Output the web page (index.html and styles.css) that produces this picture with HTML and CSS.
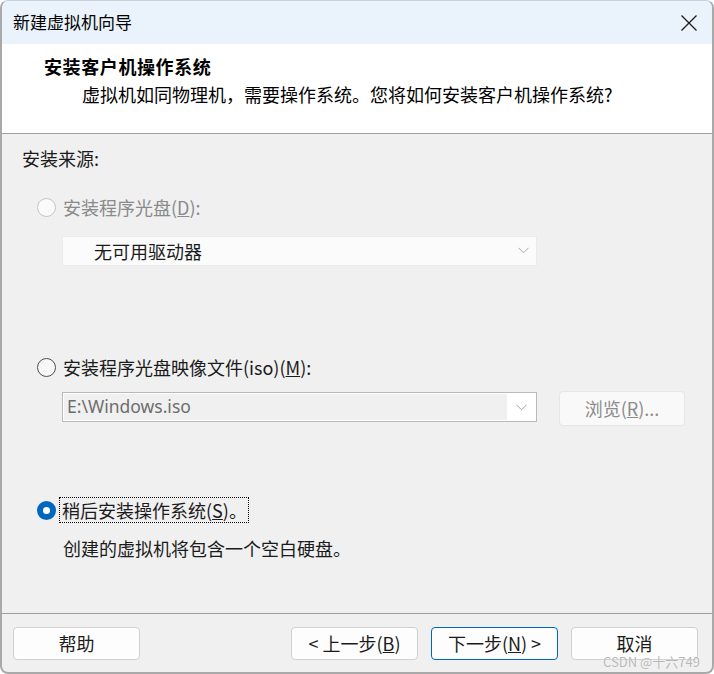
FILE: index.html
```html
<!DOCTYPE html>
<html lang="zh-CN">
<head>
<meta charset="utf-8">
<title>新建虚拟机向导</title>
<link rel="stylesheet" href="styles.css">
</head>
<body>
<div class="window">
  <div class="titlebar">
    <span class="title">新建虚拟机向导</span>
    <svg class="close" width="16" height="16" viewBox="0 0 16 16"><path d="M0.5 0.5L15.5 15.5M15.5 0.5L0.5 15.5" stroke="#1a1a1a" stroke-width="1.3" fill="none"/></svg>
  </div>
  <div class="header">
    <div class="heading">安装客户机操作系统</div>
    <div class="subtitle">虚拟机如同物理机，需要操作系统。您将如何安装客户机操作系统?</div>
  </div>
  <div class="content">
    <div class="section-label">安装来源:</div>
    <div class="option option-1 disabled"><span class="radio"></span><span class="label">安装程序光盘(<u>D</u>):</span></div>
    <div class="select">
      <span class="select-text">无可用驱动器</span>
      <svg class="chev" width="11" height="7" viewBox="0 0 11 7"><path d="M0.5 0.8L5.5 5.8L10.5 0.8" stroke="#a8a8a8" stroke-width="1" fill="none"/></svg>
    </div>
    <div class="option option-2"><span class="radio"></span><span class="label">安装程序光盘映像文件(iso)(<u>M</u>):</span></div>
    <div class="iso-row">
      <div class="combo">
        <div class="field">E:\Windows.iso</div>
        <div class="combo-btn"><svg class="chev" width="11" height="7" viewBox="0 0 11 7"><path d="M0.5 0.8L5.5 5.8L10.5 0.8" stroke="#a0a0a0" stroke-width="1" fill="none"/></svg></div>
      </div>
      <div class="browse">浏览(<u>R</u>)...</div>
    </div>
    <div class="option option-3 checked"><span class="radio"></span><span class="label focus">稍后安装操作系统(<u>S</u>)。</span></div>
    <div class="desc">创建的虚拟机将包含一个空白硬盘。</div>
  </div>
  <div class="footer">
    <div class="btn">帮助</div>
    <div class="btn-group">
      <div class="btn">&lt; 上一步(<u>B</u>)</div>
      <div class="btn primary">下一步(<u>N</u>) &gt;</div>
      <div class="btn">取消</div>
    </div>
  </div>
  <div class="watermark">CSDN @十六749</div>
</div>
</body>
</html>
```
FILE: styles.css
```css
* { box-sizing: border-box; }
html, body { margin: 0; padding: 0; background: #ffffff; }
body {
  font-family: "Noto Sans CJK SC", "Noto Sans", sans-serif;
  color: #1b1b1b;
  font-size: 18px;
}
.window {
  position: relative;
  width: 714px;
  height: 674px;
  border: 2px solid #a9a9a9;
  border-top: 1px solid #c9d2da;
  border-radius: 8px;
  display: flex;
  flex-direction: column;
  overflow: hidden;
  background: #f0f0f0;
}
.titlebar {
  height: 43px;
  flex: none;
  background: #eaf3fb;
  display: flex;
  align-items: center;
  justify-content: space-between;
  padding: 0 15px 2px 11px;
}
.title { font-size: 17px; line-height: 20px; color: #000; }
.close { display: block; margin-top: 3px; }
.header {
  height: 90px;
  flex: none;
  background: #ffffff;
  border-bottom: 1px solid #a0a0a0;
  padding: 12px 0 0 42px;
}
.heading { font-weight: 700; font-size: 18px; line-height: 20px; letter-spacing: 0.6px; color: #000; }
.subtitle { margin-top: 8px; margin-left: 38px; line-height: 20px; color: #000; }
.content {
  flex: 1;
  padding: 14px 0 0 20px;
  display: flex;
  flex-direction: column;
  align-items: flex-start;
}
.section-label { line-height: 20px; }
.option {
  display: flex;
  align-items: center;
  gap: 7px;
  margin-left: 15px;
  line-height: 20px;
}
.option-1 { margin-top: 29px; }
.option-2 { margin-top: 91px; }
.option-3 { margin-top: 72px; }
.radio {
  width: 19px;
  height: 19px;
  border-radius: 50%;
  border: 1px solid #4d4d4d;
  background: #f7f7f7;
  flex: none;
}
.disabled .radio { border-color: #c4c4c4; background: #fafafa; }
.disabled .label { color: #8a8a8a; }
.checked .radio { border: 6px solid #0067c0; background: #ffffff; }
.label.focus {
  outline: 1px dotted #000;
  line-height: 22px;
  padding: 1px 1px 1px 2px;
  margin-left: -3px;
}
.select {
  margin-top: 19px;
  margin-left: 40px;
  width: 475px;
  height: 30px;
  background: #fbfbfb;
  border: 1px solid #ebebeb;
  display: flex;
  align-items: center;
  justify-content: space-between;
  padding: 0 7px 1px 31px;
}
.select-text { line-height: 20px; color: #1b1b1b; }
.chev { display: block; }
.iso-row {
  margin-top: 14px;
  margin-left: 40px;
  display: flex;
  align-items: flex-start;
  gap: 22px;
}
.combo {
  margin-top: 1px;
  width: 475px;
  height: 30px;
  border: 1px solid #b9b9b9;
  background: #ffffff;
  padding: 1px;
  display: flex;
}
.field {
  flex: 1;
  background: #f0f0f0;
  color: #6d6d6d;
  line-height: 25px;
  padding-left: 3px;
  font-family: "Noto Sans", "Noto Sans CJK SC", sans-serif;
  font-size: 17.5px;
}
.combo-btn {
  width: 28px;
  display: flex;
  align-items: center;
  justify-content: center;
}
.browse {
  width: 126px;
  height: 35px;
  border: 1px solid #e6e6e6;
  border-radius: 4px;
  background: #f9f9f9;
  color: #8c8c8c;
  display: flex;
  align-items: center;
  justify-content: center;
  line-height: 20px;
  padding-bottom: 1px;
}
.desc { margin-top: 16px; margin-left: 41px; line-height: 20px; }
.footer {
  height: 59px;
  flex: none;
  border-top: 1px solid #a0a0a0;
  padding: 13px 14px 0 11px;
  display: flex;
  align-items: flex-start;
  justify-content: space-between;
}
.btn-group { display: flex; gap: 13px; }
.btn {
  width: 127px;
  height: 33px;
  border: 1px solid #d0d0d0;
  border-radius: 4px;
  background: #fdfdfd;
  display: flex;
  align-items: center;
  justify-content: center;
  line-height: 20px;
  padding-bottom: 2px;
  color: #1b1b1b;
}
.btn.primary { border-color: #0067c0; }
.watermark {
  position: absolute;
  right: 12px;
  bottom: 4px;
  font-size: 13px;
  line-height: 13px;
  color: rgba(170, 170, 170, 0.85);
  text-shadow: 0 0 1px rgba(255,255,255,0.9);
}
```
